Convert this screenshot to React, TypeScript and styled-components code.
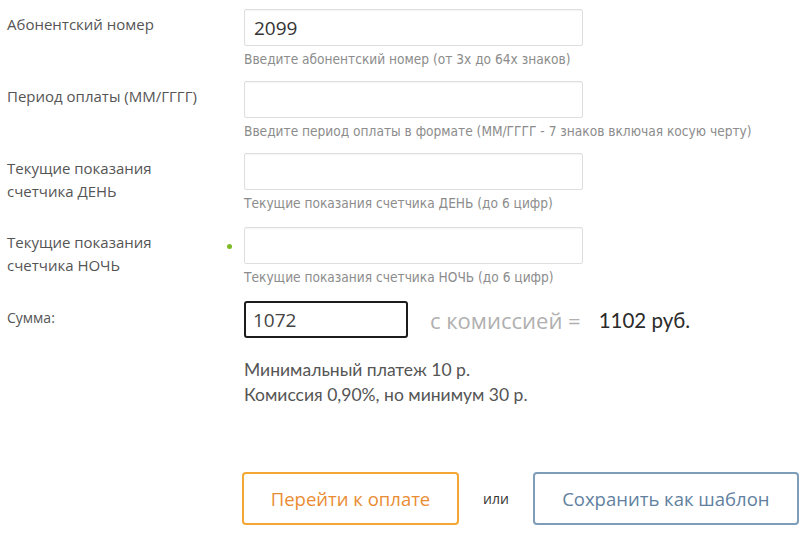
import styled, { createGlobalStyle } from "styled-components";

const GlobalStyle = createGlobalStyle`
  body {
    margin: 0;
    background: #fff;
    font-family: "Open Sans", "Liberation Sans", sans-serif;
  }
`;

const FIELDS = [
  {
    label: "Абонентский номер",
    value: "2099",
    hint: "Введите абонентский номер (от 3х до 64х знаков)",
  },
  {
    label: "Период оплаты (ММ/ГГГГ)",
    value: "",
    hint: "Введите период оплаты в формате (ММ/ГГГГ - 7 знаков включая косую черту)",
  },
  {
    label: "Текущие показания счетчика ДЕНЬ",
    value: "",
    hint: "Текущие показания счетчика ДЕНЬ (до 6 цифр)",
  },
  {
    label: "Текущие показания счетчика НОЧЬ",
    value: "",
    hint: "Текущие показания счетчика НОЧЬ (до 6 цифр)",
    marked: true,
  },
];

const App = function App() {
  return (
    <>
      <GlobalStyle />
      <Style.Form>
        {FIELDS.map((field) => (
          <Style.Row key={field.hint} $shift={field.marked ? 2 : 0}>
            <Style.Label>{field.label}</Style.Label>
            <Style.Marker>{field.marked && <Style.Dot />}</Style.Marker>
            <Style.Field>
              <Style.Input defaultValue={field.value} />
              <Style.Hint>{field.hint}</Style.Hint>
            </Style.Field>
          </Style.Row>
        ))}

        <Style.Row $shift={2}>
          <Style.SumLabel>Сумма:</Style.SumLabel>
          <Style.Marker />
          <Style.Field>
            <Style.SumLine>
              <Style.SumInput defaultValue="1072" />
              <Style.Commission>с комиссией =</Style.Commission>
              <Style.Total>1102 руб.</Style.Total>
            </Style.SumLine>
            <Style.Note>
              Минимальный платеж 10 р.
              <br />
              Комиссия 0,90%, но минимум 30 р.
            </Style.Note>
          </Style.Field>
        </Style.Row>

        <Style.Actions>
          <Style.Button $tone="orange">Перейти к оплате</Style.Button>
          <Style.Or>или</Style.Or>
          <Style.Button $tone="blue">Сохранить как шаблон</Style.Button>
        </Style.Actions>
      </Style.Form>
    </>
  );
};

export default App;

const Style = {
  Form: styled.div`
    width: 804px;
    padding: 9px 0 0 7px;
    box-sizing: border-box;
  `,
  Row: styled.div<{ $shift?: number }>`
    display: grid;
    grid-template-columns: 215px 22px 1fr;
    padding-top: ${(p) => p.$shift || 0}px;
    margin-bottom: 12px;
  `,
  Label: styled.div`
    padding-top: 4px;
    font-size: 15px;
    line-height: 23px;
    color: #555;
    max-width: 205px;
  `,
  SumLabel: styled.div`
    padding-top: 7px;
    font-size: 14px;
    line-height: 20px;
    color: #555;
  `,
  Marker: styled.div`
    display: flex;
    justify-content: flex-start;
    padding-top: 17px;
  `,
  Dot: styled.span`
    display: block;
    width: 5px;
    height: 5px;
    margin-left: 5px;
    border-radius: 50%;
    background: #7fba27;
  `,
  Field: styled.div`
    display: flex;
    flex-direction: column;
  `,
  Input: styled.input`
    box-sizing: border-box;
    width: 339px;
    height: 37px;
    padding: 0 9px;
    border: 1px solid #dedede;
    border-radius: 2px;
    box-shadow: inset 0 1px 1px rgba(0, 0, 0, 0.04);
    font-family: "Open Sans", sans-serif;
    font-size: 19px;
    color: #333;
    outline: none;
  `,
  Hint: styled.div`
    margin-top: 4px;
    font-family: "DejaVu Sans Condensed", "DejaVu Sans", sans-serif;
    font-stretch: condensed;
    font-size: 13.6px;
    line-height: 19px;
    color: #8c8c8c;
    white-space: nowrap;
  `,
  SumLine: styled.div`
    display: flex;
    align-items: center;
  `,
  SumInput: styled.input`
    box-sizing: border-box;
    width: 164px;
    height: 37px;
    padding: 0 7px;
    border: 2px solid #1c1c1c;
    border-radius: 3px;
    font-family: "Open Sans", sans-serif;
    font-size: 19px;
    color: #444;
    outline: none;
  `,
  Commission: styled.span`
    margin-left: 22px;
    font-size: 22px;
    color: #b0b0b0;
  `,
  Total: styled.span`
    margin-left: 18px;
    font-family: Lato, "Open Sans", sans-serif;
    font-size: 20.5px;
    color: #2b2b2b;
  `,
  Note: styled.div`
    margin-top: 19px;
    font-family: Lato, "Open Sans", sans-serif;
    font-size: 17.5px;
    line-height: 25px;
    color: #555;
  `,
  Actions: styled.div`
    display: flex;
    align-items: center;
    margin: 65px 0 0 235px;
  `,
  Button: styled.button<{ $tone: "orange" | "blue" }>`
    box-sizing: border-box;
    height: 53px;
    padding: 0;
    width: ${(p) => (p.$tone === "orange" ? "217px" : "266px")};
    background: #fff;
    border: 2px solid ${(p) => (p.$tone === "orange" ? "#f4a733" : "#7e9db9")};
    border-radius: 4px;
    font-family: "Open Sans", sans-serif;
    font-size: 18.5px;
    white-space: nowrap;
    color: ${(p) => (p.$tone === "orange" ? "#ea8c34" : "#62819f")};
    cursor: pointer;
  `,
  Or: styled.span`
    margin: 0 24px;
    font-size: 14px;
    color: #333;
  `,
};
